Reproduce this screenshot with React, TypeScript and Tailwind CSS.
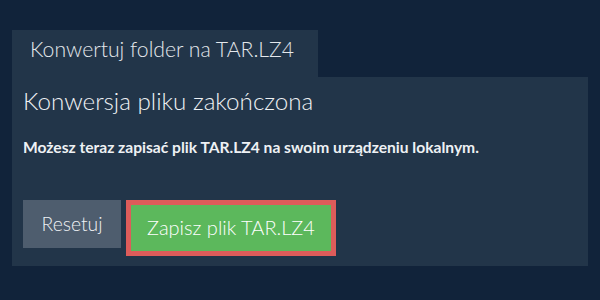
export default function App() {
  return (
    <div className="w-[600px] h-[300px] bg-[#11233a] px-3 pt-[30px] font-['Lato','Liberation_Sans',sans-serif]">
      <div className="w-[306px] h-[47px] bg-[#223549] pl-[18px] pt-[7px] text-[21.2px] leading-6 font-light text-[#e4e8ec]">
        Konwertuj folder na TAR.LZ4
      </div>
      <div className="h-[189px] bg-[#223549] pl-[11px] pt-[10px] text-[#eef1f4]">
        <h2 className="text-[24.2px] leading-[28px] font-light">Konwersja pliku zakończona</h2>
        <p className="mt-[22px] text-[15.6px] leading-5 font-bold">
          Możesz teraz zapisać plik TAR.LZ4 na swoim urządzeniu lokalnym.
        </p>
        <div className="mt-[43px] flex items-start gap-[5px]">
          <button className="w-[98px] h-12 bg-[#4e5d6e] text-[19.3px] font-light text-[#eef1f4]">Resetuj</button>
          <button className="w-[210px] h-14 border-[5px] border-[#dd5c5a] bg-[#5cb85c] pb-[2px] text-[20px] font-light text-white">
            Zapisz plik TAR.LZ4
          </button>
        </div>
      </div>
    </div>
  );
}
